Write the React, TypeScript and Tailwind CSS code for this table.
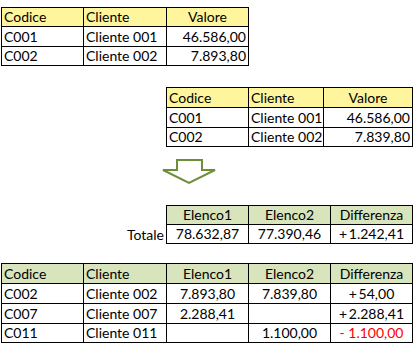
import React from "react";

type Cell = { t: string; align?: "l" | "c" | "r"; red?: boolean };
type Row = { h: number; cells: Cell[]; header?: boolean };

function Table({ widths, rows, headerBg }: { widths: number[]; rows: Row[]; headerBg: string }) {
  return (
    <div className="flex flex-col border-l border-t border-black w-max">
      {rows.map((r, i) => (
        <div key={i} className="flex" style={{ height: r.h }}>
          {r.cells.map((c, j) => (
            <div
              key={j}
              className={
                "flex items-end pb-[2px] border-r border-b border-black px-[2px] leading-none whitespace-nowrap " +
                (c.align === "c" ? "justify-center " : c.align === "r" ? "justify-end " : "justify-start ") +
                (c.red ? "text-[#ff0000]" : "text-black")
              }
              style={{ width: widths[j], backgroundColor: r.header ? headerBg : "#ffffff" }}
            >
              {c.t}
            </div>
          ))}
        </div>
      ))}
    </div>
  );
}

const YELLOW = "#fff59c";
const GREEN = "#d8e4bc";

export default function App() {
  return (
    <div
      className="w-[416px] h-[348px] bg-white flex flex-col text-[14px] overflow-hidden"
      style={{ fontFamily: "Lato, 'Open Sans', sans-serif" }}
    >
      <div className="mt-[7px] ml-[1px]">
        <Table
          widths={[82, 83, 82]}
          headerBg={YELLOW}
          rows={[
            { h: 19, header: true, cells: [{ t: "Codice" }, { t: "Cliente" }, { t: "Valore", align: "c" }] },
            { h: 20, cells: [{ t: "C001" }, { t: "Cliente 001" }, { t: "46.586,00", align: "r" }] },
            { h: 19, cells: [{ t: "C002" }, { t: "Cliente 002" }, { t: "7.893,80", align: "r" }] },
          ]}
        />
      </div>

      <div className="mt-[21px] ml-[166px]">
        <Table
          widths={[82, 75, 89]}
          headerBg={YELLOW}
          rows={[
            { h: 20, header: true, cells: [{ t: "Codice" }, { t: "Cliente" }, { t: "Valore", align: "c" }] },
            { h: 20, cells: [{ t: "C001" }, { t: "Cliente 001" }, { t: "46.586,00", align: "r" }] },
            { h: 19, cells: [{ t: "C002" }, { t: "Cliente 002" }, { t: "7.839,80", align: "r" }] },
          ]}
        />
      </div>

      <div className="mt-[10px] ml-[160px]">
        <svg width="60" height="30" viewBox="0 0 60 30">
          <polygon
            points="17,3 42,3 42,13 55,13 29,26 3,13 17,13"
            fill="#ffffff"
            stroke="#6e8f3a"
            strokeWidth="2"
            strokeLinejoin="miter"
          />
        </svg>
      </div>

      <div className="mt-[18px] flex items-end">
        <div className="w-[166px] flex justify-end pr-[2px] pb-[2px] leading-none">Totale</div>
        <Table
          widths={[82, 82, 82]}
          headerBg={GREEN}
          rows={[
            {
              h: 19,
              header: true,
              cells: [
                { t: "Elenco1", align: "c" },
                { t: "Elenco2", align: "c" },
                { t: "Differenza", align: "c" },
              ],
            },
            {
              h: 19,
              cells: [
                { t: "78.632,87", align: "c" },
                { t: "77.390,46", align: "c" },
                { t: "+\u20091.242,41", align: "c" },
              ],
            },
          ]}
        />
      </div>

      <div className="mt-[19px] ml-[1px]">
        <Table
          widths={[82, 83, 82, 82, 82]}
          headerBg={GREEN}
          rows={[
            {
              h: 20,
              header: true,
              cells: [
                { t: "Codice" },
                { t: "Cliente" },
                { t: "Elenco1", align: "c" },
                { t: "Elenco2", align: "c" },
                { t: "Differenza", align: "c" },
              ],
            },
            {
              h: 20,
              cells: [
                { t: "C002" },
                { t: "Cliente 002" },
                { t: "7.893,80", align: "c" },
                { t: "7.839,80", align: "c" },
                { t: "+\u200954,00", align: "c" },
              ],
            },
            {
              h: 20,
              cells: [
                { t: "C007" },
                { t: "Cliente 007" },
                { t: "2.288,41", align: "c" },
                { t: "" },
                { t: "+\u20092.288,41", align: "c" },
              ],
            },
            {
              h: 19,
              cells: [
                { t: "C011" },
                { t: "Cliente 011" },
                { t: "" },
                { t: "1.100,00", align: "c" },
                { t: "- 1.100,00", align: "c", red: true },
              ],
            },
          ]}
        />
      </div>
    </div>
  );
}
